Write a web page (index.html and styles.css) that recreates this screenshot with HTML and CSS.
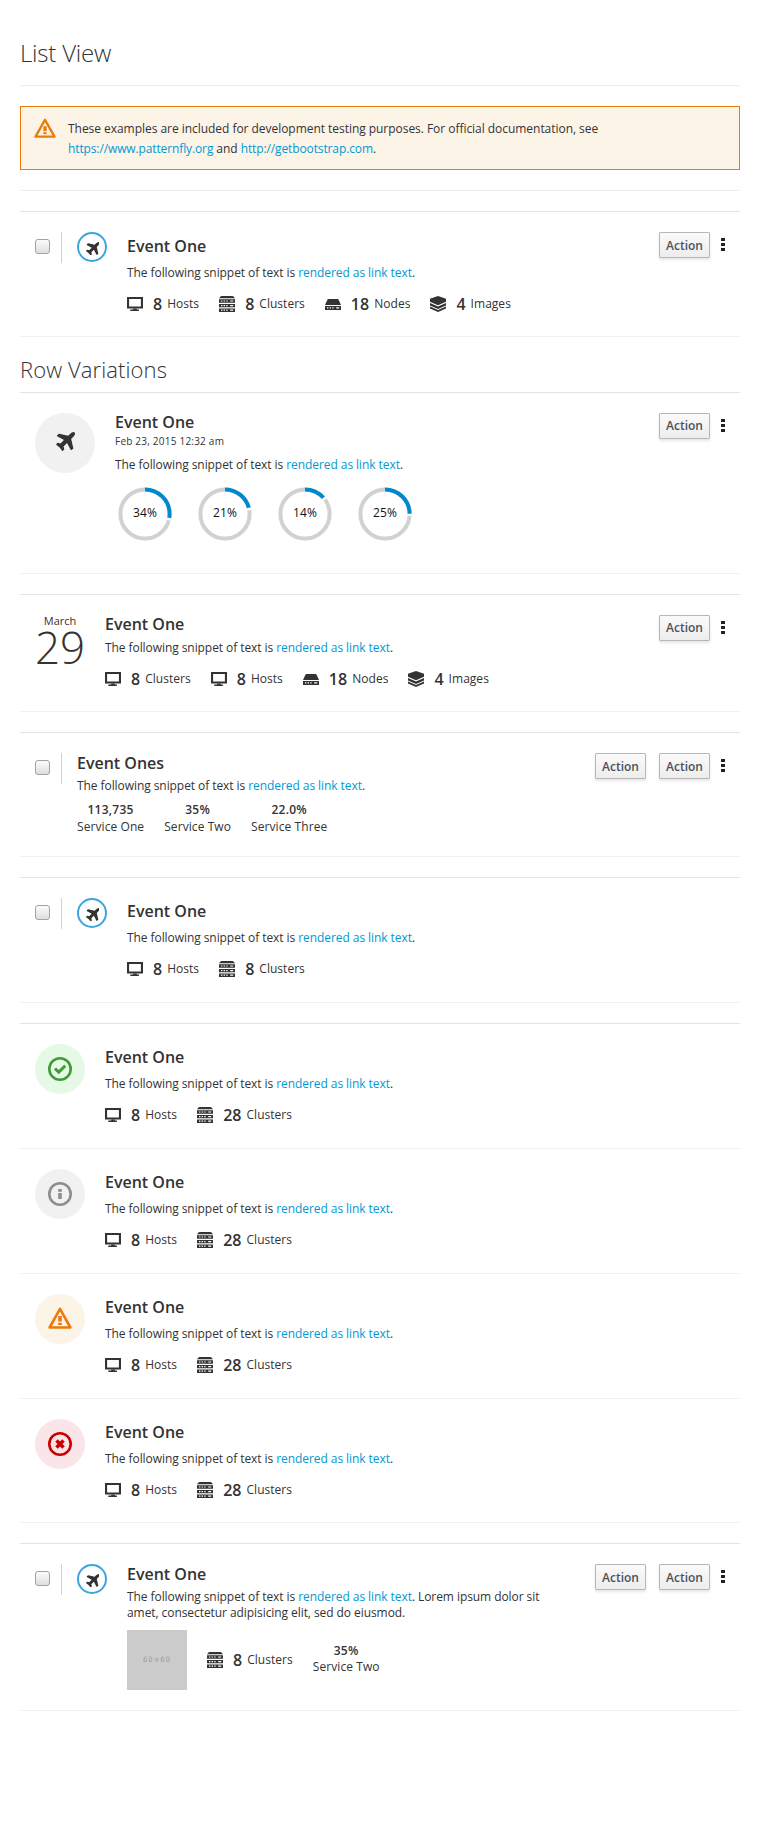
FILE: index.html
```html
<!DOCTYPE html>
<html lang="en">
<head>
<meta charset="utf-8">
<title>List View</title>
<link rel="stylesheet" href="styles.css">
</head>
<body>
<svg class="sprite" aria-hidden="true">
  <symbol id="plane" viewBox="192 132 1400 1404"><path d="M1568 160q44 52 12 148t-108 172l-161 161 160 696q5 19-12 33l-128 96q-7 6-19 6-4 0-7-1-15-3-21-16l-279-508-259 259 53 194q5 17-8 31l-96 96q-9 9-23 9h-2q-15-2-24-13l-189-252-252-189q-11-7-13-23-1-13 9-25l96-97q9-9 23-9 6 0 8 1l194 53 259-259-508-279q-14-8-17-24-2-16 9-27l128-128q14-13 30-8l665 159 160-160q76-76 172-108t148 12z"/></symbol>
  <symbol id="screen" viewBox="0 0 16 16"><path fill-rule="evenodd" d="M0 1h16v11.4H0zM2.1 3v7.4h11.8V3z"/><path d="M6.2 12.4h3.6v1.1h2.1V15H3.3v-1.5h2.9z"/></symbol>
  <symbol id="cluster" viewBox="0 0 16 16"><path d="M2.500 0h11q.6 0 1 .5L16 2.300H0L1.500.5q.4-.5 1-.5z"/><path fill-rule="evenodd" d="M0 3.300h16v3.400H0zM2 4.500v1.100h1.400V4.500zm2.600 0v1.100H6V4.500zm2.600 0v1.100h1.400V4.500zm4 0v1.100h3V4.500z"/><path fill-rule="evenodd" d="M0 8h16v3.200H0zM2 9v1.200h1.400V9zm2.600 0v1.200H6V9zm2.600 0v1.200h1.400V9zm4 0v1.200h3V9z"/><path fill-rule="evenodd" d="M0 12.500h16V16H0zM2 13.600v1.100h1.400v-1.100zm2.600 0v1.100H6v-1.100zm2.600 0v1.100h1.400v-1.100zm4 0v1.100h3v-1.100z"/></symbol>
  <symbol id="node" viewBox="0 0 16 16"><path d="M3.4 3h9.2q.7 0 1 .8L16 9H0l2.4-5.200q.3-.8 1-.8z"/><path fill-rule="evenodd" d="M0 10h16v3.900H0zM2 11.300v1.200h1.400v-1.200zm2.600 0v1.200H6v-1.200zm2.600 0v1.200h1.400v-1.200zm4 0v1.200h3v-1.200z"/></symbol>
  <symbol id="image" viewBox="0 0 16 16"><path d="M8 0l8 2.800v3L8 9.300 0 5.800v-3z"/><path d="M0 7l8 3.600L16 7v2.400l-8 3.500-8-3.500z"/><path d="M0 10.500l8 3.500 8-3.500v2L8 16l-8-3.500z"/></symbol>
  <symbol id="warn" viewBox="0 0 24 22"><path fill="none" stroke="currentColor" stroke-width="2.600" stroke-linejoin="round" d="M12 1.900L22.400 20.500H1.600z"/><path d="M10.200 9h3.600v5.500h-3.600zM10.200 15.700h3.600V18h-3.600z"/></symbol>
</svg>
<main class="page">
  <h1 class="title">List View</h1>
  <div class="alert">
    <svg class="alert-icon"><use href="#warn"/></svg>
    <p class="alert-text">These examples are included for development testing purposes. For official documentation, see <a>https://www.patternfly.org</a> and <a>http://getbootstrap.com</a>.</p>
  </div>
  <hr class="rule">

  <section class="list">
    <article class="row">
      <span class="check"><input type="checkbox" class="box"></span>
      <span class="badge badge-sm"><svg><use href="#plane"/></svg></span>
      <div class="body">
        <h3>Event One</h3>
        <p class="desc">The following snippet of text is <a>rendered as link text</a>.</p>
        <div class="stats">
          <span class="stat"><svg><use href="#screen"/></svg><b>8</b>Hosts</span>
          <span class="stat"><svg><use href="#cluster"/></svg><b>8</b>Clusters</span>
          <span class="stat"><svg><use href="#node"/></svg><b>18</b>Nodes</span>
          <span class="stat"><svg><use href="#image"/></svg><b>4</b>Images</span>
        </div>
      </div>
      <div class="actions"><button>Action</button><i class="kebab"></i></div>
    </article>
  </section>

  <h2 class="subtitle">Row Variations</h2>

  <section class="list">
    <article class="row row-donuts">
      <span class="badge badge-lg"><svg><use href="#plane"/></svg></span>
      <div class="body compact">
        <h3>Event One</h3>
        <small class="date">Feb 23, 2015 12:32 am</small>
        <p class="desc">The following snippet of text is <a>rendered as link text</a>.</p>
        <div class="donuts">
          <svg class="donut" viewBox="0 0 60 60"><circle class="track" cx="30" cy="30" r="24.600" pathLength="100"/><circle class="gap" cx="30" cy="30" r="24.600" pathLength="100" stroke-dasharray="29.200 70.800"/><circle class="arc" cx="30" cy="30" r="24.600" pathLength="100" stroke-dasharray="27.600 72.400"/><text x="30" y="33.400">34%</text></svg>
          <svg class="donut" viewBox="0 0 60 60"><circle class="track" cx="30" cy="30" r="24.600" pathLength="100"/><circle class="gap" cx="30" cy="30" r="24.600" pathLength="100" stroke-dasharray="22.500 77.500"/><circle class="arc" cx="30" cy="30" r="24.600" pathLength="100" stroke-dasharray="20.900 79.100"/><text x="30" y="33.400">21%</text></svg>
          <svg class="donut" viewBox="0 0 60 60"><circle class="track" cx="30" cy="30" r="24.600" pathLength="100"/><circle class="gap" cx="30" cy="30" r="24.600" pathLength="100" stroke-dasharray="15 85"/><circle class="arc" cx="30" cy="30" r="24.600" pathLength="100" stroke-dasharray="13.500 86.500"/><text x="30" y="33.400">14%</text></svg>
          <svg class="donut" viewBox="0 0 60 60"><circle class="track" cx="30" cy="30" r="24.600" pathLength="100"/><circle class="gap" cx="30" cy="30" r="24.600" pathLength="100" stroke-dasharray="26.200 73.800"/><circle class="arc" cx="30" cy="30" r="24.600" pathLength="100" stroke-dasharray="24.800 75.200"/><text x="30" y="33.400">25%</text></svg>
        </div>
      </div>
      <div class="actions"><button>Action</button><i class="kebab"></i></div>
    </article>
  </section>

  <section class="list spaced">
    <article class="row row-date">
      <div class="day"><span>March</span><strong>29</strong></div>
      <div class="body stacked">
        <h3>Event One</h3>
        <p class="desc">The following snippet of text is <a>rendered as link text</a>.</p>
        <div class="stats">
          <span class="stat"><svg><use href="#screen"/></svg><b>8</b>Clusters</span>
          <span class="stat"><svg><use href="#screen"/></svg><b>8</b>Hosts</span>
          <span class="stat"><svg><use href="#node"/></svg><b>18</b>Nodes</span>
          <span class="stat"><svg><use href="#image"/></svg><b>4</b>Images</span>
        </div>
      </div>
      <div class="actions"><button>Action</button><i class="kebab"></i></div>
    </article>
  </section>

  <section class="list spaced">
    <article class="row row-services">
      <span class="check"><input type="checkbox" class="box"></span>
      <div class="body stacked">
        <h3>Event Ones</h3>
        <p class="desc">The following snippet of text is <a>rendered as link text</a>.</p>
        <div class="stats services">
          <span class="service"><b>113,735</b>Service One</span>
          <span class="service"><b>35%</b>Service Two</span>
          <span class="service"><b>22.0%</b>Service Three</span>
        </div>
      </div>
      <div class="actions"><button>Action</button><button>Action</button><i class="kebab"></i></div>
    </article>
  </section>

  <section class="list spaced group">
    <article class="row row-plain">
      <span class="check"><input type="checkbox" class="box"></span>
      <span class="badge badge-sm"><svg><use href="#plane"/></svg></span>
      <div class="body">
        <h3>Event One</h3>
        <p class="desc">The following snippet of text is <a>rendered as link text</a>.</p>
        <div class="stats">
          <span class="stat"><svg><use href="#screen"/></svg><b>8</b>Hosts</span>
          <span class="stat"><svg><use href="#cluster"/></svg><b>8</b>Clusters</span>
        </div>
      </div>
    </article>
  </section>

  <section class="list spaced group">
    <article class="row">
      <span class="badge badge-md success"><svg viewBox="0 0 24 24"><circle cx="12" cy="12" r="10.700" fill="none" stroke="currentColor" stroke-width="2.600"/><path fill="none" stroke="currentColor" stroke-width="3" d="M7 11.500l3.800 3.600 6.400-6.300"/></svg></span>
      <div class="body">
        <h3>Event One</h3>
        <p class="desc">The following snippet of text is <a>rendered as link text</a>.</p>
        <div class="stats">
          <span class="stat"><svg><use href="#screen"/></svg><b>8</b>Hosts</span>
          <span class="stat"><svg><use href="#cluster"/></svg><b>28</b>Clusters</span>
        </div>
      </div>
    </article>
    <article class="row">
      <span class="badge badge-md info"><svg viewBox="0 0 24 24"><circle cx="12" cy="12" r="10.700" fill="none" stroke="currentColor" stroke-width="2.600"/><path d="M10.200 7h3.600v2.800h-3.600zM10.200 11h3.600v6h-3.600z"/></svg></span>
      <div class="body">
        <h3>Event One</h3>
        <p class="desc">The following snippet of text is <a>rendered as link text</a>.</p>
        <div class="stats">
          <span class="stat"><svg><use href="#screen"/></svg><b>8</b>Hosts</span>
          <span class="stat"><svg><use href="#cluster"/></svg><b>28</b>Clusters</span>
        </div>
      </div>
    </article>
    <article class="row">
      <span class="badge badge-md warning"><svg><use href="#warn"/></svg></span>
      <div class="body">
        <h3>Event One</h3>
        <p class="desc">The following snippet of text is <a>rendered as link text</a>.</p>
        <div class="stats">
          <span class="stat"><svg><use href="#screen"/></svg><b>8</b>Hosts</span>
          <span class="stat"><svg><use href="#cluster"/></svg><b>28</b>Clusters</span>
        </div>
      </div>
    </article>
    <article class="row row-last">
      <span class="badge badge-md danger"><svg viewBox="0 0 24 24"><circle cx="12" cy="12" r="10.700" fill="none" stroke="currentColor" stroke-width="2.600"/><path fill="none" stroke="currentColor" stroke-width="3.600" d="M8.500 8.500l7 7M15.500 8.500l-7 7"/></svg></span>
      <div class="body">
        <h3>Event One</h3>
        <p class="desc">The following snippet of text is <a>rendered as link text</a>.</p>
        <div class="stats">
          <span class="stat"><svg><use href="#screen"/></svg><b>8</b>Hosts</span>
          <span class="stat"><svg><use href="#cluster"/></svg><b>28</b>Clusters</span>
        </div>
      </div>
    </article>
  </section>

  <section class="list spaced">
    <article class="row row-media">
      <span class="check"><input type="checkbox" class="box"></span>
      <span class="badge badge-sm"><svg><use href="#plane"/></svg></span>
      <div class="body stacked">
        <h3>Event One</h3>
        <p class="desc tight">The following snippet of text is <a>rendered as link text</a>. Lorem ipsum dolor sit amet, consectetur adipisicing elit, sed do eiusmod.</p>
        <div class="stats media">
          <span class="thumb">60×60</span>
          <span class="stat"><svg><use href="#cluster"/></svg><b>8</b>Clusters</span>
          <span class="service"><b>35%</b>Service Two</span>
        </div>
      </div>
      <div class="actions"><button>Action</button><button>Action</button><i class="kebab"></i></div>
    </article>
  </section>
</main>
</body>
</html>
```
FILE: styles.css
```css
* { box-sizing: border-box; }
body {
  margin: 0;
  background: #fff;
  color: #333;
  font: 12px/20px "Open Sans", sans-serif;
}
h1, h2, h3, p { margin: 0; }
a { color: #0099d3; }
svg { display: block; fill: currentColor; flex: none; }
.sprite { position: absolute; width: 0; height: 0; }
.page { padding: 40px 20px 0; }

.title {
  height: 46px;
  border-bottom: 1px solid #ededed;
  font-size: 24px;
  line-height: 26px;
  font-weight: 300;
  letter-spacing: -.2px;
}
.alert {
  display: flex;
  height: 64px;
  margin: 20px 0;
  padding: 11px 100px 0 13px;
  border: 1px solid #ec7a08;
  background: #fdf4e8;
}
.alert-icon { width: 22px; height: 20px; margin-right: 12px; color: #ec7a08; }
.alert-text { padding-top: 1px; letter-spacing: -.04px; }
.alert-text a { letter-spacing: -.12px; }
.rule { height: 1px; margin: 0 0 20px; border: 0; background: #ededed; }
.subtitle {
  height: 55px;
  padding-top: 19px;
  font-size: 22px;
  line-height: 26px;
  font-weight: 300;
  letter-spacing: .1px;
}

.list { border-top: 1px solid #e4e4e4; }
.spaced { margin-top: 20px; }
.row {
  display: flex;
  height: 125px;
  padding: 20px 15px 0;
  border-bottom: 1px solid #f1f1f1;
}
.row-last { height: 124px; }
.row-donuts { height: 181px; }
.row-date { height: 117px; }
.row-services { height: 124px; }
.row-media { height: 167px; }

.check {
  width: 27px;
  height: 31px;
  margin-right: 15px;
  padding-top: 7px;
  border-right: 1px solid #d1d1d1;
}
.box {
  display: block;
  width: 15px;
  height: 15px;
  margin: 0;
  appearance: none;
  border: 1px solid #a2a2a2;
  border-radius: 3px;
  background: linear-gradient(#fcfcfc, #dedede);
}
.badge {
  display: flex;
  flex: none;
  align-items: center;
  justify-content: center;
  margin-right: 20px;
  border-radius: 50%;
}
.badge-sm { width: 30px; height: 30px; border: 2px solid #39a5dc; }
.badge-sm svg { width: 13.500px; height: 13.500px; margin: 3px 0 0 1px; }
.badge-lg { width: 60px; height: 60px; background: #f1f1f1; }
.badge-lg svg { width: 19px; height: 19px; margin: -3px 0 0 1px; }
.badge-md { width: 50px; height: 50px; }
.badge-md svg { width: 24px; height: 24px; }
.success { color: #3f9c35; background: #e6f8e6; }
.info { color: #8b8d8f; background: #f1f1f1; }
.warning { color: #ec7a08; background: #fdf4e8; }
.warning svg { height: 22px; margin-bottom: 3px; }
.danger { color: #c00; background: #fae6e8; }

.body { flex: 1; min-width: 0; }
h3 { padding-top: 3px; font-size: 16px; line-height: 22px; font-weight: 600; }
.group h3 { padding-top: 2px; }
.desc { margin-top: 6px; line-height: 20px; letter-spacing: -.07px; }
.stats { display: flex; gap: 20px; margin-top: 10px; }
.stat { display: flex; align-items: center; height: 22px; letter-spacing: .03px; }
.stat svg { width: 16px; height: 16px; margin-right: 10px; }
.stat b { margin-right: 5px; font-size: 16px; font-weight: 600; }

.compact h3 { padding: 0; line-height: 18px; }
.date { display: block; font-size: 10px; line-height: 20px; letter-spacing: .22px; }
.compact .desc { margin-top: 4px; }
.donuts { display: flex; gap: 20px; margin-top: 9px; }
.donut { width: 60px; height: 60px; }
.donut circle { fill: none; stroke-width: 4; transform: rotate(-90deg); transform-origin: center; }
.donut .track { stroke: #d1d1d1; }
.donut .gap { stroke: #fff; }
.donut .arc { stroke: #0088ce; }
.donut text { fill: #111; font-size: 12px; letter-spacing: .2px; text-anchor: middle; }

.day { display: flex; flex-direction: column; align-items: center; width: 50px; margin-right: 20px; font-size: 11px; line-height: 12px; }
.day strong { font-size: 44px; line-height: 40px; font-weight: 300; }
.stacked h3 { padding: 0; line-height: 18px; }
.stacked .desc { margin-top: 5px; }
.row-services .stacked, .row-media .stacked { padding-top: 1px; }
.row-services .desc { margin-top: 4px; }

.service { display: flex; flex-direction: column; align-items: center; line-height: 17px; letter-spacing: .08px; }
.service b { font-weight: 600; letter-spacing: .25px; }
.row-services .services { margin-top: 5px; }
.stacked .tight { width: 430px; margin-top: 6px; line-height: 16px; }
.row-media .media { align-items: center; margin-top: 9px; }
.media .service { margin-bottom: 2px; line-height: 16px; }
.thumb {
  display: flex;
  align-items: center;
  justify-content: center;
  width: 60px;
  height: 60px;
  background: #cbcbcb;
  color: #999;
  font: 7.500px/10px "DejaVu Sans Condensed", "DejaVu Sans", sans-serif;
  letter-spacing: 1px;
}

.actions { display: flex; align-items: flex-start; }
button {
  width: 51px;
  height: 26px;
  margin-left: 13px;
  padding: 1px 0 0;
  border: 1px solid #b7b7b7;
  border-radius: 1px;
  background: linear-gradient(#fafafa, #ededed);
  box-shadow: 0 2px 3px rgba(3, 3, 3, .1);
  color: #4d5258;
  font: 600 12px/22px "Open Sans", sans-serif;
}
.row-donuts button, .row-date button { padding-top: 0; }
.kebab {
  width: 4px;
  height: 13px;
  margin: 6px 0 0 11px;
  background: repeating-linear-gradient(#222 0 3px, transparent 3px 5px);
}
```
